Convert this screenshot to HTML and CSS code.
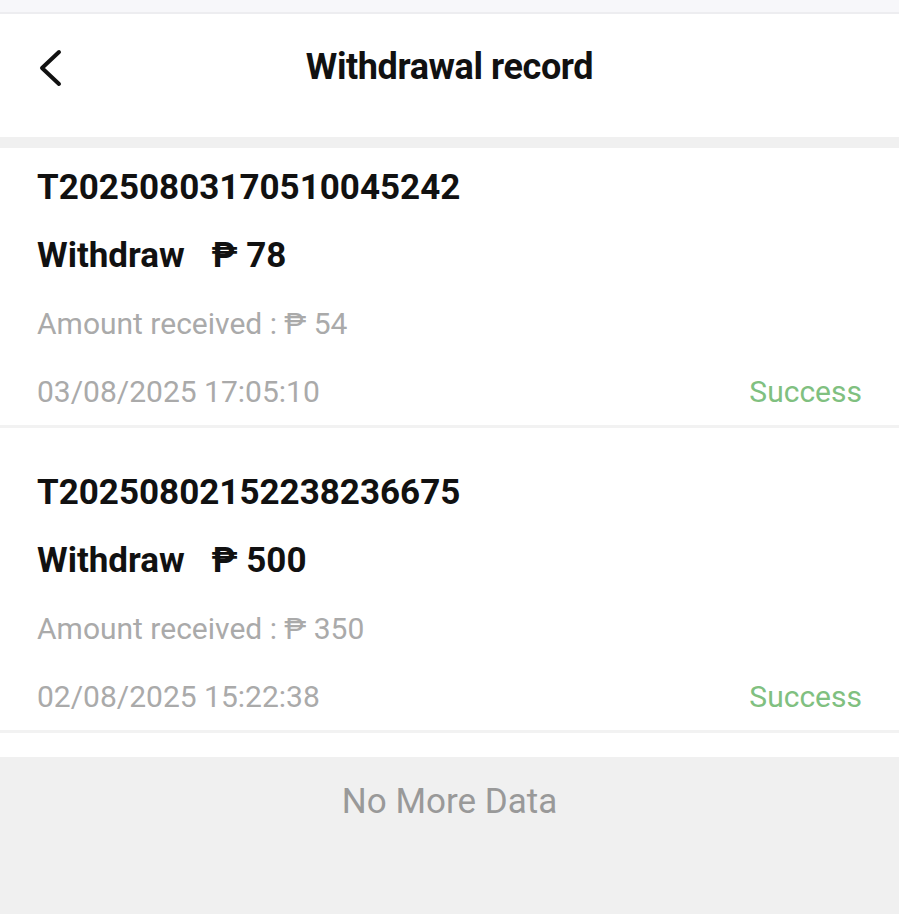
FILE: index.html
```html
<!DOCTYPE html>
<html>
<head>
  <title>Withdrawal record</title>
  <link rel="stylesheet" href="styles.css">
</head>
<body>
  <div class="status-strip"></div>
  <div class="header">
    <a class="back" href="#">
      <svg width="26" height="38" viewBox="0 0 26 38">
        <path d="M22 3 L5 19 L22 35" fill="none" stroke="#111" stroke-width="4" stroke-linecap="round" stroke-linejoin="round"/>
      </svg>
    </a>
    <h1>Withdrawal record</h1>
  </div>

  <div class="list">
    <div class="record first">
      <div class="order">T20250803170510045242</div>
      <div class="amount">Withdraw <span class="peso">₱ 78</span></div>
      <div class="received">Amount received : ₱ 54</div>
      <div class="bottom-row">
        <span class="date">03/08/2025 17:05:10</span>
        <span class="status">Success</span>
      </div>
    </div>
    <div class="record">
      <div class="order">T20250802152238236675</div>
      <div class="amount">Withdraw <span class="peso">₱ 500</span></div>
      <div class="received">Amount received : ₱ 350</div>
      <div class="bottom-row">
        <span class="date">02/08/2025 15:22:38</span>
        <span class="status">Success</span>
      </div>
    </div>
    <div class="spacer"></div>
  </div>

  <div class="no-more">No More Data</div>
</body>
</html>
```

FILE: styles.css
```css
body {
  margin: 0;
  font-family: Roboto, "Liberation Sans", sans-serif;
  background-color: #f0f0f0;
  color: #111;
  height: 914px;
  overflow: hidden;
}

.status-strip {
  height: 12px;
  background-color: #f7f7fa;
  border-bottom: 2px solid #ededf0;
}

.header {
  height: 123px;
  box-sizing: border-box;
  padding-top: 32px;
  background-color: #fff;
  display: flex;
  justify-content: center;
  position: relative;
  margin-bottom: 11px;
}

.header h1 {
  margin: 0;
  font-size: 36px;
  line-height: 42px;
  font-weight: 700;
  letter-spacing: -0.4px;
}

.back {
  position: absolute;
  left: 37px;
  top: 35px;
  display: flex;
}

.list {
  background-color: #fff;
}

.record {
  padding: 45px 37px 13px;
  border-bottom: 3px solid #f2f2f2;
}

.record.first {
  padding-top: 20px;
}

.order,
.amount {
  font-size: 35px;
  font-weight: 700;
  line-height: 40px;
}

.amount {
  margin-top: 28px;
}

.peso {
  margin-left: 18px;
}

.received,
.bottom-row {
  font-size: 30px;
  line-height: 40px;
  color: #aaa;
  margin-top: 28px;
}

.bottom-row {
  display: flex;
  justify-content: space-between;
}

.status {
  color: #80c080;
}

.spacer {
  height: 24px;
}

.no-more {
  text-align: center;
  font-size: 35px;
  line-height: 42px;
  color: #999;
  padding-top: 24px;
}
```
